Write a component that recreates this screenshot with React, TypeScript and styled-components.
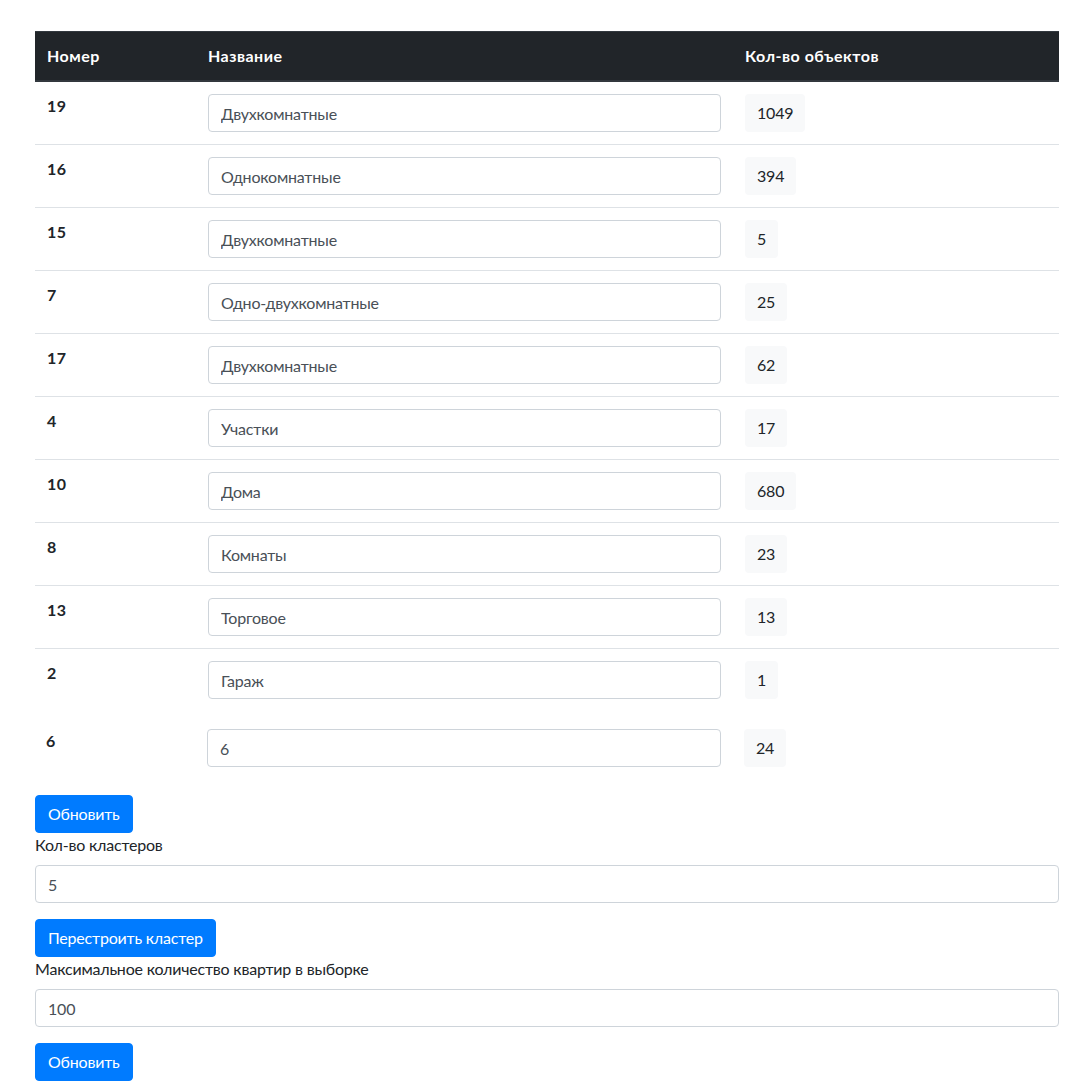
import React from "react";
import styled, { createGlobalStyle } from "styled-components";

const Global = createGlobalStyle`
  html, body { margin: 0; padding: 0; background: #fff; }
  body {
    font-family: Lato, "Noto Sans", sans-serif;
    font-size: 16px;
    line-height: 24px;
    letter-spacing: -0.2px;
    color: #212529;
  }
  * { box-sizing: border-box; }
`;

const Page = styled.div`
  width: 1024px;
  margin: 31px 0 0 35px;
`;

const Table = styled.table`
  width: 100%;
  border-collapse: collapse;
  margin-bottom: 16px;
`;

const HeadCell = styled.th<{ $w: number }>`
  width: ${(p) => p.$w}px;
  background: #212529;
  color: #fff;
  text-align: left;
  font-weight: 700;
  letter-spacing: 0.5px;
  padding: 12px;
  border-top: 1px solid #32383e;
  border-bottom: 2px solid #32383e;
  vertical-align: bottom;
`;

const Row = styled.tr<{ $plain?: boolean }>`
  & > td, & > th {
    padding: ${(p) => (p.$plain ? "18px 12px 12px 11px" : "12px")};
    border-top: ${(p) => (p.$plain ? "none" : "1px solid #dee2e6")};
    vertical-align: top;
  }
`;

const NumCell = styled.th`
  text-align: left;
  font-weight: 700;
  letter-spacing: 0.4px;
`;

const Cell = styled.td``;

const Input = styled.input`
  display: block;
  width: 100%;
  height: 38px;
  padding: 6px 12px;
  font: inherit;
  font-size: 16px;
  line-height: 24px;
  letter-spacing: -0.2px;
  color: #495057;
  background: #fff;
  border: 1px solid #ced4da;
  border-radius: 4px;
  outline: none;
`;

const Count = styled.span`
  display: inline-block;
  padding: 7px 12px;
  background: #f8f9fa;
  border-radius: 4px;
  line-height: 24px;
`;

const Button = styled.button`
  display: inline-block;
  font: inherit;
  font-size: 16px;
  line-height: 24px;
  letter-spacing: -0.2px;
  padding: 6px 12px;
  height: 38px;
  color: #fff;
  background: #007bff;
  border: 1px solid #007bff;
  border-radius: 4px;
  cursor: pointer;
`;

const Group = styled.div`
  margin-bottom: 16px;
`;

const Label = styled.label`
  display: block;
  margin-bottom: 8px;
`;

const rows: [string, string, string][] = [
  ["19", "Двухкомнатные", "1049"],
  ["16", "Однокомнатные", "394"],
  ["15", "Двухкомнатные", "5"],
  ["7", "Одно-двухкомнатные", "25"],
  ["17", "Двухкомнатные", "62"],
  ["4", "Участки", "17"],
  ["10", "Дома", "680"],
  ["8", "Комнаты", "23"],
  ["13", "Торговое", "13"],
  ["2", "Гараж", "1"],
];

export default function App() {
  return (
    <>
      <Global />
      <Page>
        <Table>
          <thead>
            <tr>
              <HeadCell $w={161}>Номер</HeadCell>
              <HeadCell $w={537}>Название</HeadCell>
              <HeadCell $w={326}>Кол-во объектов</HeadCell>
            </tr>
          </thead>
          <tbody>
            {rows.map(([n, name, c]) => (
              <Row key={n}>
                <NumCell>{n}</NumCell>
                <Cell>
                  <Input defaultValue={name} />
                </Cell>
                <Cell>
                  <Count>{c}</Count>
                </Cell>
              </Row>
            ))}
            <Row $plain>
              <NumCell>6</NumCell>
              <Cell>
                <Input defaultValue="6" />
              </Cell>
              <Cell>
                <Count>24</Count>
              </Cell>
            </Row>
          </tbody>
        </Table>
        <Button>Обновить</Button>
        <Group>
          <Label>Кол-во кластеров</Label>
          <Input defaultValue="5" />
        </Group>
        <Button>Перестроить кластер</Button>
        <Group>
          <Label>Максимальное количество квартир в выборке</Label>
          <Input defaultValue="100" />
        </Group>
        <Button>Обновить</Button>
      </Page>
    </>
  );
}
